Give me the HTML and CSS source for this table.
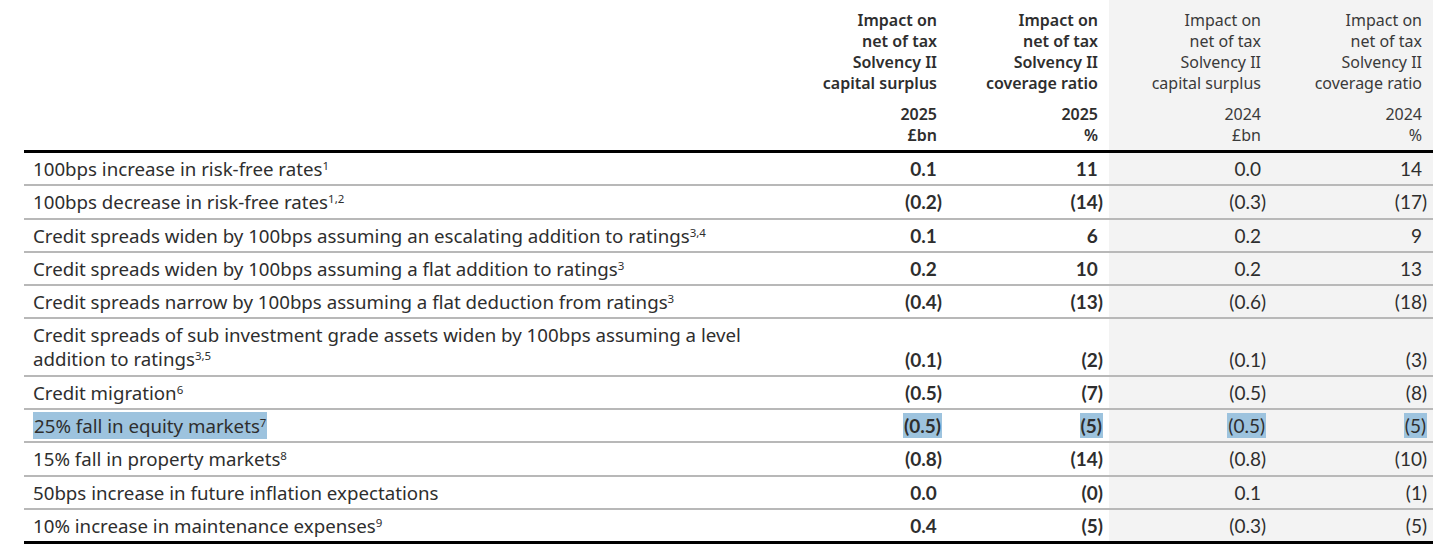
FILE: index.html
```html
<!DOCTYPE html>
<html lang="en">
<head>
<meta charset="utf-8">
<title>Solvency II sensitivities</title>
<link rel="stylesheet" href="styles.css">
</head>
<body>
<table class="sens">
  <colgroup>
    <col class="c-label">
    <col class="c-num">
    <col class="c-num">
    <col class="c-num3">
    <col class="c-num">
  </colgroup>
  <thead>
    <tr>
      <th class="h-label"></th>
      <th class="h cur"><div class="h-title">Impact on<br>net of tax<br>Solvency II<br>capital surplus</div><div class="h-unit">2025<br>£bn</div></th>
      <th class="h cur"><div class="h-title">Impact on<br>net of tax<br>Solvency II<br>coverage ratio</div><div class="h-unit">2025<br>%</div></th>
      <th class="h prev"><div class="h-title">Impact on<br>net of tax<br>Solvency II<br>capital surplus</div><div class="h-unit">2024<br>£bn</div></th>
      <th class="h prev"><div class="h-title">Impact on<br>net of tax<br>Solvency II<br>coverage ratio</div><div class="h-unit">2024<br>%</div></th>
    </tr>
  </thead>
  <tbody>
    <tr>
      <td class="label">100bps increase in risk-free rates<sup>1</sup></td>
      <td class="num cur"><span class="p">0.1</span></td>
      <td class="num cur"><span class="p">11</span></td>
      <td class="num prev"><span class="p">0.0</span></td>
      <td class="num prev"><span class="p">14</span></td>
    </tr>
    <tr>
      <td class="label">100bps decrease in risk-free rates<sup>1,2</sup></td>
      <td class="num cur">(0.2)</td>
      <td class="num cur">(14)</td>
      <td class="num prev">(0.3)</td>
      <td class="num prev">(17)</td>
    </tr>
    <tr>
      <td class="label">Credit spreads widen by 100bps assuming an escalating addition to ratings<sup>3,4</sup></td>
      <td class="num cur"><span class="p">0.1</span></td>
      <td class="num cur"><span class="p">6</span></td>
      <td class="num prev"><span class="p">0.2</span></td>
      <td class="num prev"><span class="p">9</span></td>
    </tr>
    <tr>
      <td class="label">Credit spreads widen by 100bps assuming a flat addition to ratings<sup>3</sup></td>
      <td class="num cur"><span class="p">0.2</span></td>
      <td class="num cur"><span class="p">10</span></td>
      <td class="num prev"><span class="p">0.2</span></td>
      <td class="num prev"><span class="p">13</span></td>
    </tr>
    <tr>
      <td class="label">Credit spreads narrow by 100bps assuming a flat deduction from ratings<sup>3</sup></td>
      <td class="num cur">(0.4)</td>
      <td class="num cur">(13)</td>
      <td class="num prev">(0.6)</td>
      <td class="num prev">(18)</td>
    </tr>
    <tr>
      <td class="label"><div class="wrap">Credit spreads of sub investment grade assets widen by 100bps assuming a level addition to ratings<sup>3,5</sup></div></td>
      <td class="num cur">(0.1)</td>
      <td class="num cur">(2)</td>
      <td class="num prev">(0.1)</td>
      <td class="num prev">(3)</td>
    </tr>
    <tr>
      <td class="label">Credit migration<sup>6</sup></td>
      <td class="num cur">(0.5)</td>
      <td class="num cur">(7)</td>
      <td class="num prev">(0.5)</td>
      <td class="num prev">(8)</td>
    </tr>
    <tr class="sel">
      <td class="label"><span class="hl">25% fall in equity markets<sup>7</sup></span></td>
      <td class="num cur"><span class="hl">(0.5)</span></td>
      <td class="num cur"><span class="hl">(5)</span></td>
      <td class="num prev"><span class="hl">(0.5)</span></td>
      <td class="num prev"><span class="hl">(5)</span></td>
    </tr>
    <tr>
      <td class="label">15% fall in property markets<sup>8</sup></td>
      <td class="num cur">(0.8)</td>
      <td class="num cur">(14)</td>
      <td class="num prev">(0.8)</td>
      <td class="num prev">(10)</td>
    </tr>
    <tr>
      <td class="label">50bps increase in future inflation expectations</td>
      <td class="num cur"><span class="p">0.0</span></td>
      <td class="num cur">(0)</td>
      <td class="num prev"><span class="p">0.1</span></td>
      <td class="num prev">(1)</td>
    </tr>
    <tr>
      <td class="label">10% increase in maintenance expenses<sup>9</sup></td>
      <td class="num cur"><span class="p">0.4</span></td>
      <td class="num cur">(5)</td>
      <td class="num prev">(0.3)</td>
      <td class="num prev">(5)</td>
    </tr>
  </tbody>
</table>
</body>
</html>
```
FILE: styles.css
```css
html, body {
  margin: 0;
  padding: 0;
  background: #ffffff;
}

body {
  font-family: "Noto Sans", "Lato", sans-serif;
  color: #2e2e2e;
}

.sens {
  margin-left: 24px;
  width: 1409px;
  border-collapse: collapse;
  table-layout: fixed;
}

.c-label { width: 763px; }
.c-num { width: 161px; }
.c-num3 { width: 163px; }

.sens thead th {
  vertical-align: bottom;
  text-align: right;
  font-size: 16px;
  line-height: 21px;
  padding: 10px 11px 4px 0;
  border-bottom: 3px solid #000;
}

.sens thead th.h-label {
  padding: 0;
}

.h.cur { font-weight: 600; }
.h.prev { font-weight: 400; color: #3a3a3a; }

.h-unit {
  margin-top: 10px;
}

.prev {
  background: #f3f3f3;
}

.sens tbody td {
  font-size: 18.7px;
  line-height: 23px;
  padding: 4.1px 0 4.2px 0;
  border-bottom: 2px solid #b8b8b8;
  vertical-align: bottom;
}

.sens tbody tr:last-child td {
  border-bottom: 3px solid #000;
}

.sens td.label {
  padding-left: 9px;
  vertical-align: middle;
}

.wrap {
  width: 740px;
  line-height: 24px;
  margin-top: -1px;
}

.sens td.num {
  font-family: "Lato", "Noto Sans", sans-serif;
  font-size: 19px;
  text-align: right;
  padding-right: 6px;
}

.num.cur { font-weight: 700; }
.num.prev { font-weight: 400; }

.p::after {
  content: ")";
  visibility: hidden;
}

sup {
  font-size: 11.5px;
  line-height: 0;
  vertical-align: 6px;
}

.hl {
  background: #9dc3de;
  padding: 1px 1px;
}
```
